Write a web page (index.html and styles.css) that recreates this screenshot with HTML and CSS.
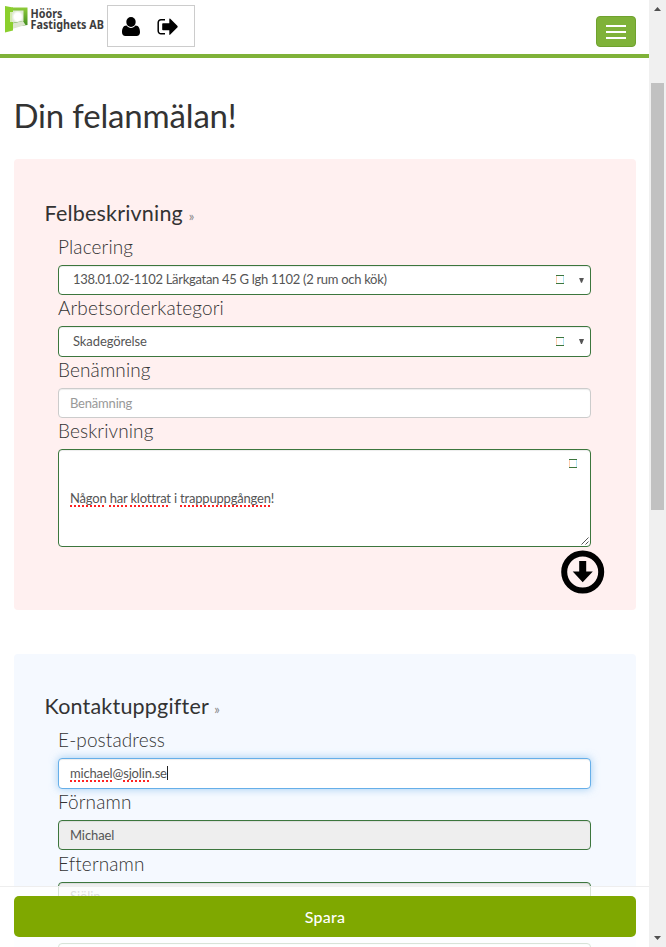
FILE: index.html
```html
<!DOCTYPE html>
<html lang="sv">
<head>
<meta charset="utf-8">
<title>Din felanmälan!</title>
<link rel="stylesheet" href="styles.css">
</head>
<body>
<div class="window">
  <div class="page">
    <header class="navbar">
      <div class="brand">
        <svg class="brand-mark" width="23" height="28" viewBox="0 0 23 28">
          <defs>
            <linearGradient id="leaf" x1="0" y1="0" x2="0" y2="1"><stop offset="0" stop-color="#8fcb3a"/><stop offset="1" stop-color="#3c8a1c"/></linearGradient>
            <radialGradient id="glow"><stop offset="0" stop-color="#fff"/><stop offset=".6" stop-color="#fff"/><stop offset="1" stop-color="#dfe9d2"/></radialGradient>
          </defs>
          <path d="M7 2.500h15.500V20L7 22z" fill="url(#leaf)"/>
          <path d="M7 5.500h11.500V16L7 18z" fill="url(#glow)"/>
          <path d="M7 18.500L18 16l2.500 4L7 24z" fill="#dde6cf"/>
          <path d="M0 1l8 1.500V7H5v10h3v8.500l-8 2z" fill="#8bcf2d"/>
          <path d="M5 7h2v10H5z" fill="#d5ebb0"/>
        </svg>
        <div class="brand-name">Höörs<br>Fastighets AB</div>
      </div>
      <div class="user-box">
        <svg class="user" width="18" height="19" viewBox="0 0 18 19"><ellipse cx="9" cy="5" rx="4.700" ry="5"/><path d="M4.500 8.500C1 8.500 0 12 0 15.200C0 17.600 1.300 19 3.400 19h11.200c2.100 0 3.400-1.400 3.400-3.800c0-3.200-1-6.700-4.500-6.700C12.300 10 10.800 11 9 11S5.700 10 4.500 8.500z"/></svg>
        <svg class="logout" width="21" height="18" viewBox="0 0 21 18"><path d="M8 1.800H4A2.800 2.800 0 0 0 1.200 4.600v8.400A2.800 2.800 0 0 0 4 15.800h4" fill="none" stroke="#000" stroke-width="1.500"/><path d="M6 5.200h6.300V1.200Q12.300 0 13.300.8l7 7q.8.900 0 1.800l-7 7q-1 .8-1-.4v-4H6q-.8 0-.8-.8V6q0-.8.800-.8z"/></svg>
      </div>
      <div class="menu-button"><i></i><i></i><i></i></div>
    </header>

    <main class="content">
      <h1>Din felanmälan!</h1>

      <section class="panel fault">
        <h2>Felbeskrivning <small>»</small></h2>
        <div class="fields">
          <div class="label"><span>Placering</span></div>
          <div class="field valid select first"><span class="value place">138.01.02-1102 Lärkgatan 45 G lgh 1102 (2 rum och kök)</span><i class="mark"></i><i class="caret"></i></div>
          <div class="label"><span>Arbetsorderkategori</span></div>
          <div class="field valid select"><span class="value">Skadegörelse</span><i class="mark"></i><i class="caret"></i></div>
          <div class="label"><span>Benämning</span></div>
          <div class="field"><span class="value placeholder">Benämning</span></div>
          <div class="label"><span>Beskrivning</span></div>
          <div class="field valid area">
            <span class="value message"><u>Någon</u> <u>har</u> <u>klottrat</u> i <u>trappuppgången</u>!</span>
            <i class="mark"></i>
            <svg class="grip" width="8" height="8" viewBox="0 0 8 8"><path d="M.5 7.500l7-7M4.500 7.500l3-3" stroke="#555" fill="none"/></svg>
          </div>
        </div>
        <svg class="next" width="44" height="44" viewBox="0 0 44 44"><circle cx="21.700" cy="22" r="18.500" fill="none" stroke="#000" stroke-width="6"/><path d="M18.200 11h7v10.500h6.600L21.700 32.300l-10-10.800h6.500z"/></svg>
      </section>

      <section class="panel contact">
        <h2>Kontaktuppgifter <small>»</small></h2>
        <div class="fields">
          <div class="label"><span>E-postadress</span></div>
          <div class="field focused"><span class="value email"><u>michael</u>@<u>sjolin</u>.se</span><i class="cursor"></i></div>
          <div class="label"><span>Förnamn</span></div>
          <div class="field valid disabled"><span class="value">Michael</span></div>
          <div class="label"><span>Efternamn</span></div>
          <div class="field valid disabled"><span class="value">Sjölin</span></div>
          <div class="label"></div>
          <div class="field valid"></div>
        </div>
      </section>
    </main>

    <footer class="save-bar"><div class="save">Spara</div></footer>
  </div>
  <aside class="scrollbar">
    <svg class="arrow" width="7" height="4" viewBox="0 0 7 4"><path d="M0 4L3.500 0 7 4z"/></svg>
    <div class="thumb"></div>
    <svg class="arrow end" width="7" height="4" viewBox="0 0 7 4"><path d="M0 0L3.500 4 7 0z"/></svg>
  </aside>
</div>
</body>
</html>
```
FILE: styles.css
```css
* { box-sizing: border-box; }
body { margin: 0; background: #fff; font-family: Lato, "Liberation Sans", sans-serif; color: #333; }
.window { display: flex; width: 666px; height: 947px; overflow: hidden; }
.page { position: relative; width: 649px; height: 947px; overflow: hidden; }

.navbar { display: flex; align-items: flex-start; height: 58px; padding: 5px 13px 0 5px; border-bottom: 4px solid #7fb239; }
.brand { display: flex; width: 102px; }
.brand-mark { flex: none; }
.brand-name { padding: 3px 0 0 3px; font: 700 12.500px/11px "Noto Sans", sans-serif; color: #3d3d3d; white-space: nowrap; transform: scaleX(.86); transform-origin: 0 0; }
.user-box { display: flex; flex: none; width: 88px; height: 42px; padding: 11px 0 0 14px; border: 1px solid #ccc; }
.user { margin-right: 17px; }
.logout { margin-top: 1px; }
.menu-button { display: flex; flex-direction: column; align-items: center; gap: 4px; width: 40px; height: 31px; margin: 11px 0 0 auto; padding-top: 8px; background: #7fb239; border: 1px solid #6fa22e; border-radius: 4px; }
.menu-button i { width: 20px; height: 2px; background: #fff; }

.content { padding: 0 13px 0 14px; }
h1 { margin: 0 0 0 -.5px; padding-top: 36px; height: 101px; font-size: 33px; line-height: 42px; font-weight: 400; letter-spacing: -.17px; }
.panel { position: relative; padding: 39px 45px 0 44px; border-radius: 4px; }
.fault { height: 451px; background: #fff0f0; }
.contact { height: 400px; margin-top: 44px; padding-top: 37px; background: #f5f9ff; }
h2 { margin: 0 0 0 -13.500px; height: 35px; font-size: 21.500px; line-height: 30px; font-weight: 400; letter-spacing: .2px; white-space: nowrap; }
h2 small { font-size: 13px; letter-spacing: 0; color: #888; }
.label { height: 30.900px; font-size: 19px; line-height: 25px; font-weight: 300; letter-spacing: .12px; white-space: nowrap; }
.fault .label:first-child { height: 32px; line-height: 27px; }
.contact .label { height: 31.250px; line-height: 26px; }
.contact .label:first-child { height: 32.300px; line-height: 28px; }
.contact .label:nth-child(5) { line-height: 28px; }
.field { display: flex; align-items: center; height: 30.450px; padding: 0 7px 1px 11px; border: 1px solid #ccc; border-radius: 4px; background: #fff; box-shadow: inset 0 1px 1px rgba(0, 0, 0, .075); font-size: 13px; letter-spacing: -.1px; color: #555; }
.value { white-space: nowrap; }
.place { margin-bottom: 2px; letter-spacing: -.3px; }
.message { margin-top: 2px; letter-spacing: -.19px; }
.email { letter-spacing: -.17px; }
.valid { border-color: #3c763d; }
.select { padding-left: 14px; }
.placeholder { margin-top: 2px; color: #999; letter-spacing: -.2px; }
.mark { width: 8px; height: 9px; margin-left: auto; border: solid #3c763d; border-width: 1px 0; box-shadow: inset 1px 0 #ffcfb0, inset -1px 0 #b8e6f5; }
.caret { width: 5px; height: 5px; margin: 1px -1px 0 15px; background: #555; clip-path: polygon(0 0, 100% 0, 60% 100%, 40% 100%); }
.area { position: relative; height: 98px; }
.area .mark { align-self: flex-start; margin: 9px 6px 0 auto; }
.grip { position: absolute; right: 1px; bottom: 1px; }
u { text-decoration: underline dotted #f22 1.500px; text-underline-offset: 1.500px; text-decoration-skip-ink: none; }
.next { position: absolute; right: 31px; top: 391px; }
.focused { border-color: #66afe9; box-shadow: inset 0 1px 1px rgba(0, 0, 0, .075), 0 0 8px rgba(102, 175, 233, .6); }
.cursor { width: 1px; height: 14px; background: #222; }
.disabled { background: #eee; }

.save-bar { position: absolute; left: 0; right: 0; bottom: 0; height: 61px; padding: 9px 13px 0 14px; border-top: 1px solid #eee; background: rgba(255, 255, 255, .8); }
.save { height: 41px; border-radius: 5px; background: #7fa800; color: #fff; font-size: 16px; line-height: 42px; letter-spacing: .2px; font-weight: 500; text-align: center; }

.scrollbar { display: flex; flex-direction: column; align-items: center; width: 17px; height: 947px; padding: 7px 0; background: #f0f0f0; }
.arrow { fill: #505050; }
.thumb { width: 13px; height: 427px; margin-top: 72px; background: #c1c1c1; }
.end { margin-top: auto; }
```
